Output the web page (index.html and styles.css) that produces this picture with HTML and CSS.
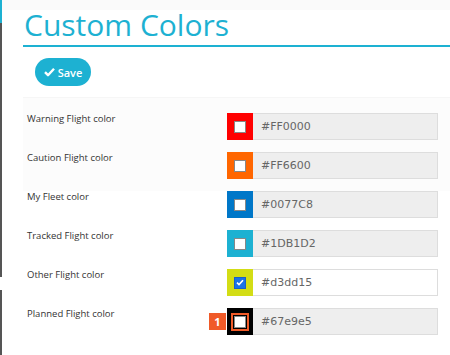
FILE: index.html
```html
<!DOCTYPE html>
<html lang="en">
<head>
    <meta charset="UTF-8">
    <title>Custom Colors</title>
    <link rel="stylesheet" href="styles.css">
</head>
<body>
    <div class="page">
        <div class="rail">
            <div class="rail-top"></div>
            <div class="rail-dark"></div>
            <div class="rail-gap"></div>
            <div class="rail-dark rail-fill"></div>
        </div>
        <div class="content">
            <div class="topband"></div>
            <h1 class="title">Custom Colors</h1>
            <div class="toolbar">
                <button class="btn-save">
                    <svg width="11" height="10" viewBox="0 0 11 10"><path d="M1 5.2 L4 8.2 L10 1.8" fill="none" stroke="#fff" stroke-width="2.4" stroke-linejoin="round"/></svg>
                    Save
                </button>
            </div>
            <div class="rows">
                <div class="row">
                    <span class="label">Warning Flight color</span>
                    <div class="picker">
                        <span class="swatch" style="background:#FF0000"><span class="check"></span></span>
                        <span class="value">#FF0000</span>
                    </div>
                </div>
                <div class="row">
                    <span class="label">Caution Flight color</span>
                    <div class="picker">
                        <span class="swatch" style="background:#FF6600"><span class="check"></span></span>
                        <span class="value">#FF6600</span>
                    </div>
                </div>
                <div class="row">
                    <span class="label">My Fleet color</span>
                    <div class="picker">
                        <span class="swatch" style="background:#0077C8"><span class="check"></span></span>
                        <span class="value">#0077C8</span>
                    </div>
                </div>
                <div class="row">
                    <span class="label">Tracked Flight color</span>
                    <div class="picker">
                        <span class="swatch" style="background:#1DB1D2"><span class="check"></span></span>
                        <span class="value">#1DB1D2</span>
                    </div>
                </div>
                <div class="row">
                    <span class="label">Other Flight color</span>
                    <div class="picker active">
                        <span class="swatch" style="background:#d3dd15">
                            <span class="check checked">
                                <svg width="8" height="7" viewBox="0 0 8 7"><path d="M1 3.6 L3 5.5 L7 1.2" fill="none" stroke="#fff" stroke-width="1.6"/></svg>
                            </span>
                        </span>
                        <span class="value">#d3dd15</span>
                    </div>
                </div>
                <div class="row">
                    <span class="label">Planned Flight color</span>
                    <div class="picker">
                        <span class="swatch" style="background:#000000">
                            <span class="badge">1</span>
                            <span class="check marked"></span>
                        </span>
                        <span class="value">#67e9e5</span>
                    </div>
                </div>
            </div>
        </div>
    </div>
</body>
</html>
```
FILE: styles.css
```css
body {
    margin: 0;
    font-family: "Open Sans", Arial, sans-serif;
    background-color: #ffffff;
    overflow: hidden;
}

.page {
    display: flex;
    height: 355px;
}

.rail {
    width: 2px;
    display: flex;
    flex-direction: column;
}

.rail-top {
    height: 23px;
    background-color: #1db1d2;
}

.rail-dark {
    height: 254px;
    background-color: #555555;
}

.rail-gap {
    height: 13px;
}

.rail-fill {
    flex: 1;
}

.content {
    flex: 1;
    display: flex;
    flex-direction: column;
}

.topband {
    height: 10px;
    background-color: #fafafa;
}

.title {
    margin: 0 0 0 21px;
    height: 35px;
    border-bottom: 2px solid #1db1d2;
    color: #1db1d2;
    font-size: 30px;
    font-weight: normal;
    line-height: 30px;
    padding-left: 1px;
}

.toolbar {
    height: 50px;
    padding-left: 33px;
    display: flex;
    align-items: center;
}

.btn-save {
    width: 56px;
    height: 28px;
    border: none;
    border-radius: 14px;
    background-color: #1db1d2;
    color: #ffffff;
    font-family: "Open Sans", Arial, sans-serif;
    font-size: 11px;
    font-weight: 600;
    display: flex;
    align-items: center;
    justify-content: center;
    gap: 3px;
    padding: 0;
}

.rows {
    margin-left: 21px;
    padding-top: 15px;
    border-top: 1px solid #f6f6f6;
    background: linear-gradient(#fcfcfc 0, #fcfcfc 93px, #ffffff 93px);
    flex: 1;
}

.row {
    display: flex;
    height: 27px;
    margin-bottom: 12px;
}

.label {
    width: 200px;
    padding-left: 4px;
    font-size: 9.5px;
    color: #333333;
    line-height: 12px;
}

.picker {
    display: flex;
    width: 211px;
    height: 27px;
}

.swatch {
    position: relative;
    width: 26px;
    height: 27px;
    display: flex;
    align-items: center;
    justify-content: center;
}

.check {
    width: 10px;
    height: 10px;
    border: 1px solid #888888;
    background-color: #ffffff;
    display: flex;
    align-items: center;
    justify-content: center;
}

.check.checked {
    background-color: #1a73e8;
    border-color: #1a5fc8;
}

.check.marked {
    outline: 2px solid #f05a28;
    outline-offset: 1px;
}

.badge {
    position: absolute;
    left: -18px;
    top: 5px;
    width: 17px;
    height: 17px;
    background-color: #f05a28;
    color: #ffffff;
    font-size: 11px;
    font-weight: bold;
    line-height: 17px;
    text-align: center;
}

.value {
    flex: 1;
    border: 1px solid #dddddd;
    border-left: none;
    background-color: #eeeeee;
    color: #666666;
    font-family: "DejaVu Sans", sans-serif;
    font-size: 11px;
    line-height: 25px;
    padding-left: 8px;
}

.picker.active .value {
    background-color: #ffffff;
}
```
